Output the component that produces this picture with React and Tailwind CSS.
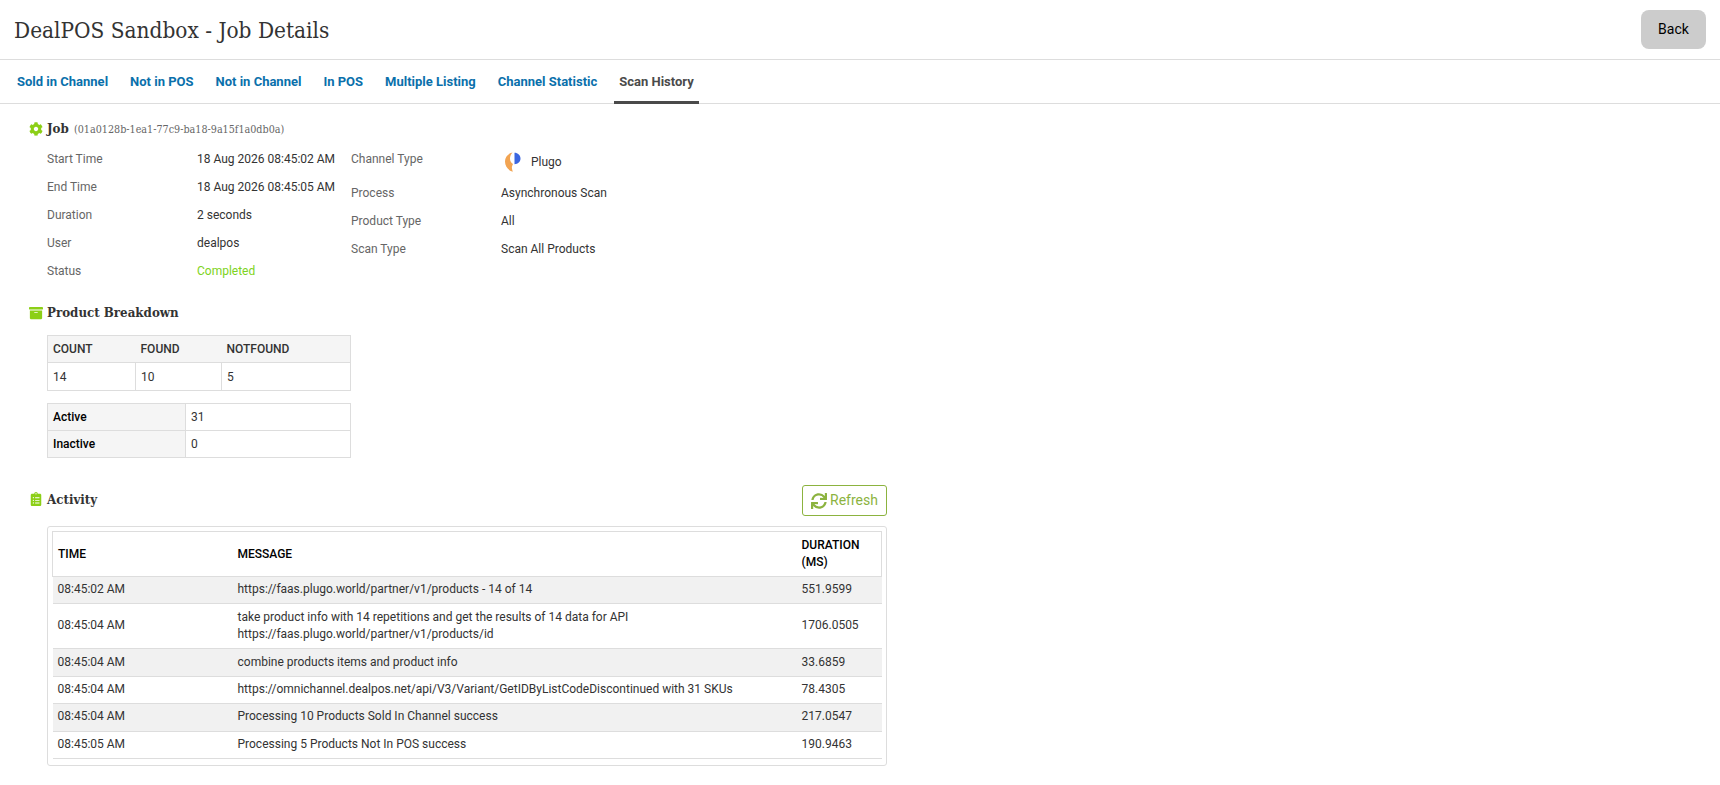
import { FaArchive, FaClipboardList, FaCog, FaSync } from 'react-icons/fa'

const TABS = ['Sold in Channel', 'Not in POS', 'Not in Channel', 'In POS', 'Multiple Listing', 'Channel Statistic', 'Scan History']

const JOB_LEFT = [
  ['Start Time', '18 Aug 2026 08:45:02 AM'],
  ['End Time', '18 Aug 2026 08:45:05 AM'],
  ['Duration', '2 seconds'],
  ['User', 'dealpos'],
]

const JOB_RIGHT = [
  ['Process', 'Asynchronous Scan'],
  ['Product Type', 'All'],
  ['Scan Type', 'Scan All Products'],
]

const ACTIVITY = [
  ['08:45:02 AM', 'https://faas.plugo.world/partner/v1/products - 14 of 14', '551.9599'],
  ['08:45:04 AM', 'take product info with 14 repetitions and get the results of 14 data for API https://faas.plugo.world/partner/v1/products/id', '1706.0505'],
  ['08:45:04 AM', 'combine products items and product info', '33.6859'],
  ['08:45:04 AM', 'https://omnichannel.dealpos.net/api/V3/Variant/GetIDByListCodeDiscontinued with 31 SKUs', '78.4305'],
  ['08:45:04 AM', 'Processing 10 Products Sold In Channel success', '217.0547'],
  ['08:45:05 AM', 'Processing 5 Products Not In POS success', '190.9463'],
]

const SLAB = "font-['DejaVu_Serif_Condensed','DejaVu_Serif',serif]"

function PlugoLogo() {
  return (
    <svg width="16" height="20" viewBox="0 0 16 20">
      <path d="M7.5 0.5C2.8 1.6 0 5 0 9.5c0 5 3.4 9 7.8 10.2C7.2 17.6 6.6 16 7 14.6c0.2-1 0.6-1.8 1-2.6C6 11 4.8 8.6 5 6c0.2-2.2 1-4 2.5-5.5z" fill="#f2a452" />
      <path d="M9.5 0.8v11.4c3.4 0 6-2.5 6-5.7s-2.6-5.7-6-5.7z" fill="#3b66e0" />
    </svg>
  )
}

function SectionTitle({ icon, children, className }) {
  return (
    <div className={`flex items-center ${className || ''}`}>
      <span className="flex w-[18px] shrink-0 justify-center pr-[4px] text-[14px] text-[#8ccf17]">{icon}</span>
      <h2 className={`${SLAB} text-[13.2px] font-bold text-[#333]`}>{children}</h2>
    </div>
  )
}

function InfoRow({ label, children, valueClass }) {
  return (
    <div className="flex h-[28px] items-center">
      <div className="w-[150px] text-[#666]">{label}</div>
      <div className={valueClass || 'text-[#333]'}>{children}</div>
    </div>
  )
}

export default function App() {
  return (
    <div className="min-h-[785px] bg-white font-['Roboto',sans-serif] text-[12px] text-[#333]">
      <header className="flex h-[60px] items-center justify-between border-b border-[#ddd] px-[14px]">
        <h1 className={`${SLAB} pt-[2px] text-[22.4px] font-normal text-[#333]`}>DealPOS Sandbox - Job Details</h1>
        <button type="button" className="h-[39px] w-[65px] rounded-[8px] bg-[#ccc] text-[14px] text-black">
          Back
        </button>
      </header>

      <nav className="flex h-[44px] gap-[12px] border-b border-[#ddd] pl-[12px]">
        {TABS.map((tab) => (
          <a
            key={tab}
            className={
              tab === 'Scan History'
                ? 'flex h-[44px] items-center border-b-[3px] border-[#4a4a4a] px-[5px] pt-[3px] text-[13px] font-bold text-[#4a4a4a]'
                : 'flex h-[44px] items-center px-[5px] text-[13px] font-bold text-[#0a70ab]'
            }
          >
            {tab}
          </a>
        ))}
      </nav>

      <main className="pl-[29px]">
        <SectionTitle className="mt-[15px] h-[20px]" icon={<FaCog />}>
          Job <span className="ml-[1px] text-[10.7px] font-normal text-[#666]">(01a0128b-1ea1-77c9-ba18-9a15f1a0db0a)</span>
        </SectionTitle>

        <div className="mt-[6px] flex pl-[18px]">
          <div className="w-[304px]">
            {JOB_LEFT.map(([label, value]) => (
              <InfoRow key={label} label={label}>{value}</InfoRow>
            ))}
            <InfoRow label="Status" valueClass="text-[#7ed321]">Completed</InfoRow>
          </div>
          <div>
            <div className="flex h-[34px] items-center">
              <div className="mt-[-6px] w-[150px] text-[#666]">Channel Type</div>
              <div className="ml-[4px] flex items-center gap-[10px]">
                <PlugoLogo />
                Plugo
              </div>
            </div>
            {JOB_RIGHT.map(([label, value]) => (
              <InfoRow key={label} label={label}>{value}</InfoRow>
            ))}
          </div>
        </div>

        <SectionTitle className="mt-[18px] h-[20px]" icon={<FaArchive />}>Product Breakdown</SectionTitle>

        <div className="ml-[18px] mt-[12px] w-[304px]">
          <table className="w-full table-fixed border-collapse">
            <thead>
              <tr className="h-[27px] bg-[#f5f5f5] text-left">
                <th className="w-[88px] border-y border-l border-[#ddd] px-[5px] font-medium">COUNT</th>
                <th className="w-[86px] border-y border-[#ddd] px-[5px] font-medium">FOUND</th>
                <th className="border-y border-r border-[#ddd] px-[5px] font-medium">NOTFOUND</th>
              </tr>
            </thead>
            <tbody>
              <tr className="h-[28px]">
                <td className="border border-[#ddd] px-[5px]">14</td>
                <td className="border border-[#ddd] px-[5px]">10</td>
                <td className="border border-[#ddd] px-[5px]">5</td>
              </tr>
            </tbody>
          </table>

          <table className="mt-[12px] w-full table-fixed border-collapse">
            <tbody>
              {[['Active', '31'], ['Inactive', '0']].map(([label, value]) => (
                <tr key={label} className="h-[27px]">
                  <th className="w-[138px] border border-[#ddd] bg-[#f5f5f5] px-[5px] text-left font-medium text-black">{label}</th>
                  <td className="border border-[#ddd] px-[5px]">{value}</td>
                </tr>
              ))}
            </tbody>
          </table>
        </div>

        <div className="mt-[27px] flex h-[31px] w-[858px] items-center justify-between">
          <SectionTitle className="pb-[2px]" icon={<FaClipboardList />}>Activity</SectionTitle>
          <button type="button" className="flex h-[31px] w-[85px] items-center justify-center gap-[3px] rounded-[3px] border border-[#8cb33f] text-[14px] text-[#8cb33f]">
            <FaSync className="text-[16px]" />
            Refresh
          </button>
        </div>

        <div className="ml-[18px] mt-[10px] w-[840px] rounded-[3px] border border-[#ddd] p-[4px] pb-[6px]">
          <table className="w-full table-fixed border-collapse">
            <thead>
              <tr className="h-[45px] text-left text-black">
                <th className="w-[180px] border-y border-l border-[#ddd] px-[5px] font-medium">TIME</th>
                <th className="w-[564px] border-y border-[#ddd] px-[5px] font-medium">MESSAGE</th>
                <th className="border-y border-r border-[#ddd] px-[5px] font-medium leading-[17px]">DURATION (MS)</th>
              </tr>
            </thead>
            <tbody>
              {ACTIVITY.map(([time, message, duration], i) => (
                <tr key={i} className={`border-b border-[#ddd] leading-[17px] ${i % 2 === 0 ? 'bg-[#f1f1f1]' : ''} ${i === 1 ? 'h-[45px]' : 'h-[27.4px]'}`}>
                  <td className="px-[5px] pb-[1px]">{time}</td>
                  <td className="px-[5px] pb-[1px]">{message}</td>
                  <td className="px-[5px] pb-[1px]">{duration}</td>
                </tr>
              ))}
            </tbody>
          </table>
        </div>
      </main>
    </div>
  )
}
